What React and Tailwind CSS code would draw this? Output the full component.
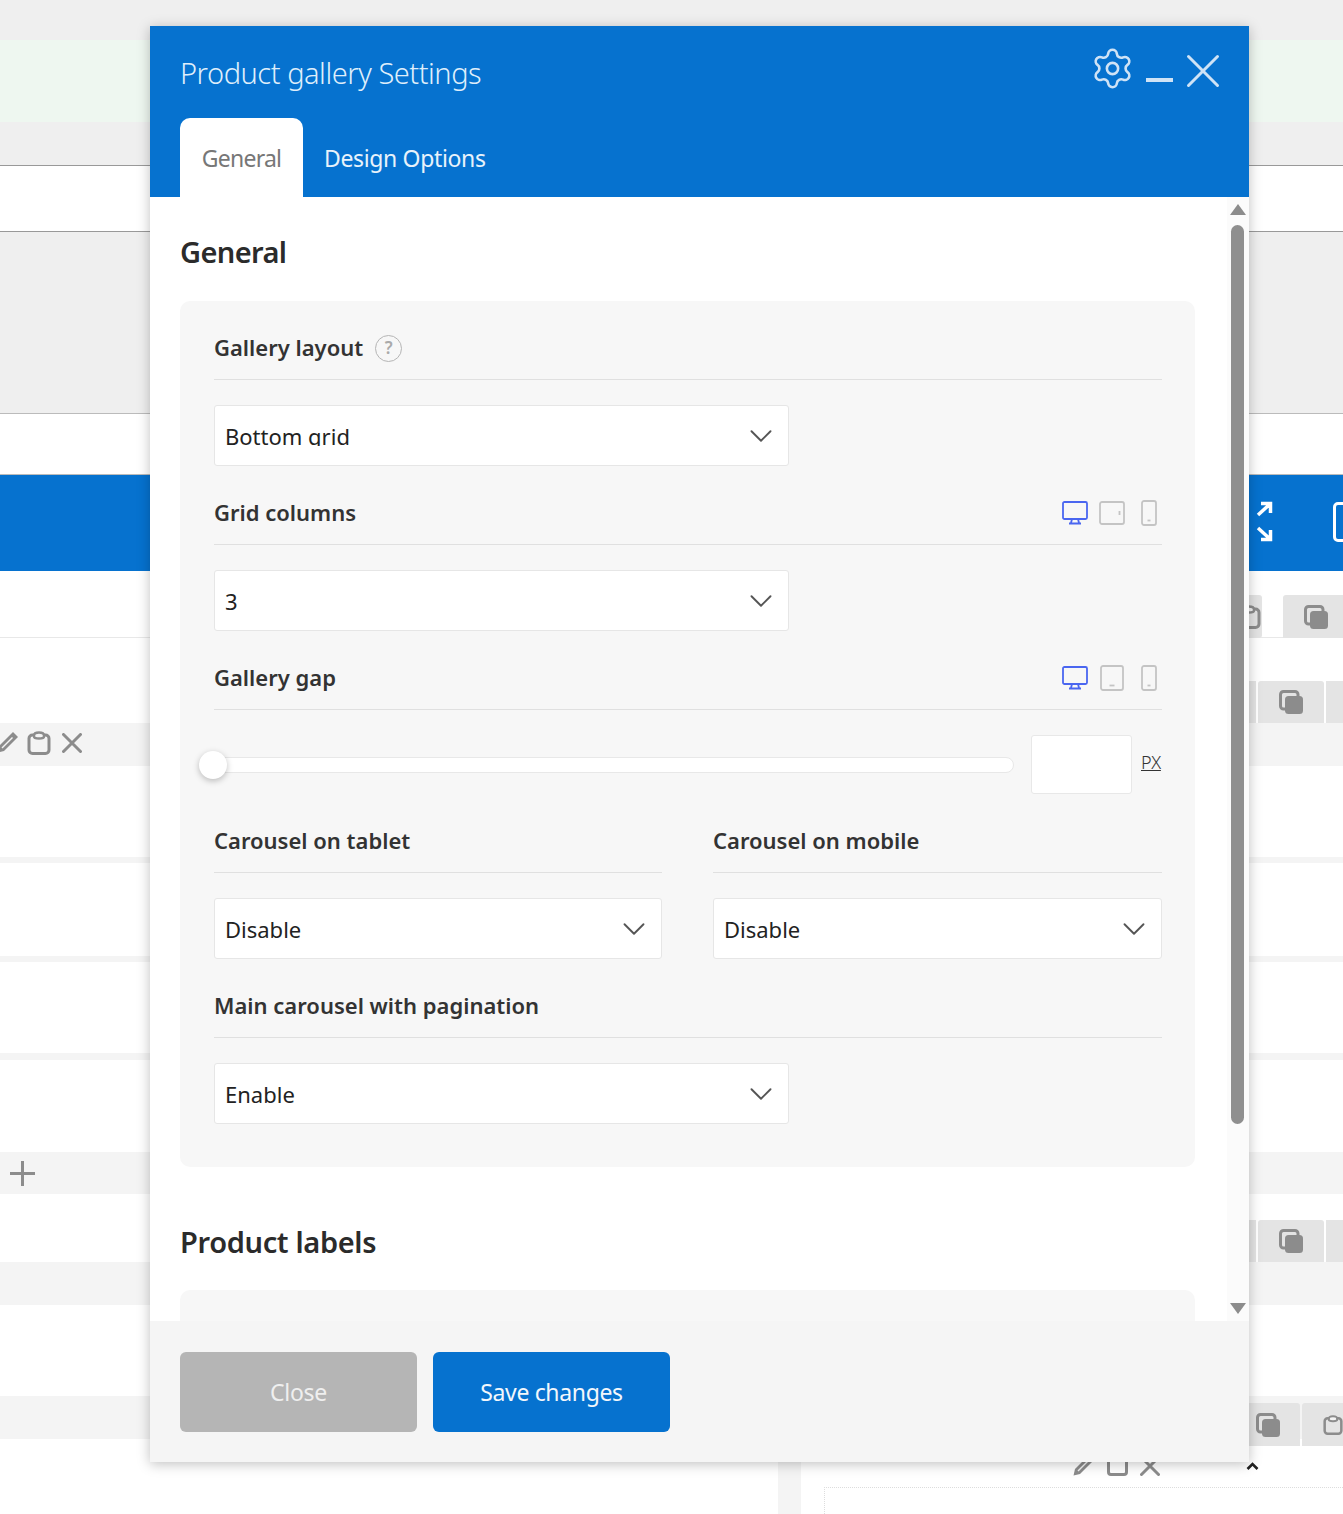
import { ChevronDown, Settings, X } from 'lucide-react';

const font = { fontFamily: '"Noto Sans", "Open Sans", sans-serif' };

// page behind the modal
const rows = [
  'h-[40px] bg-[#efefef]',
  'h-[82px] bg-[#eef7f0]',
  'h-[44px] bg-[#efefef] border-b border-[#999999]',
  'h-[66px] bg-white border-b border-[#999999]',
  'h-[182px] bg-[#efefef] border-b border-[#bbbbbb]',
  'h-[61px] bg-white border-b border-[#bbbbbb]',
  'h-[96px] bg-[#0672cf]',
  'h-[67px] bg-white border-b border-[#e8e8e8]',
  'h-[85px] bg-white',
  'h-[43px] bg-[#f4f4f4]',
  'h-[91px] bg-white',
  'h-[6px] bg-[#f4f4f4]',
  'h-[93px] bg-white',
  'h-[6px] bg-[#f4f4f4]',
  'h-[91px] bg-white',
  'h-[7px] bg-[#f4f4f4]',
  'h-[92px] bg-white',
  'h-[42px] bg-[#f4f4f4]',
  'h-[68px] bg-white',
  'h-[43px] bg-[#f4f4f4]',
  'h-[91px] bg-white',
  'h-[43px] bg-[#f4f4f4]',
  'h-[75px] bg-white',
];

function CopyIcon() {
  return (
    <svg width="26" height="26" viewBox="0 0 26 26" fill="none">
      <path d="M7 20H5.500A3 3 0 0 1 2.500 17V5.500A3 3 0 0 1 5.500 2.500H17A3 3 0 0 1 20 5.500V7" stroke="#8c8c8c" strokeWidth="3" />
      <rect x="7" y="7" width="18" height="18" rx="3.500" fill="#8c8c8c" />
    </svg>
  );
}

function ClipIcon({ size = 24 }) {
  return (
    <svg width={size} height={size} viewBox="0 0 24 24" fill="none" stroke="#8c8c8c" strokeWidth="3">
      <rect x="2" y="4" width="20" height="18.500" rx="3.500" />
      <path d="M7 5.500V4.500C7 2.800 8.500 1.500 12 1.500S17 2.800 17 4.500V5.500C17 7 15 7.500 12 7.500S7 7 7 5.500Z" fill="#f4f4f4" strokeWidth="2.500" />
    </svg>
  );
}

function PencilIcon() {
  return (
    <svg width="22" height="22" viewBox="0 0 22 22" fill="#8c8c8c">
      <path d="M16 1L21 6L7 20L0.500 21.500L2 15Z" />
      <path d="M15 6L16 7L5.500 17.500L4.500 16.500Z" fill="#f4f4f4" />
    </svg>
  );
}

function ThinX({ size = 20 }) {
  return (
    <svg width={size} height={size} viewBox="0 0 20 20" stroke="#8c8c8c" strokeWidth="3" strokeLinecap="round">
      <path d="M1.500 1.500L18.500 18.500M18.500 1.500L1.500 18.500" />
    </svg>
  );
}

function Background() {
  return (
    <div className="absolute inset-0 overflow-hidden">
      {rows.map((r, i) => (
        <div key={i} className={r} />
      ))}

      <div className="absolute left-[778px] top-[1439px] w-[23px] h-[75px] bg-[#f4f4f4]" />
      <div className="absolute left-[824px] top-[1487px] w-[519px] h-[27px] border-t border-l border-dotted border-[#dddddd]" />

      {/* left edge icons */}
      <div className="absolute left-[-3px] top-[731px]"><PencilIcon /></div>
      <div className="absolute left-[27px] top-[731px]"><ClipIcon /></div>
      <div className="absolute left-[62px] top-[733px]"><ThinX /></div>
      <div className="absolute left-[10px] top-[1172px] w-[25px] h-[3px] bg-[#8c8c8c]" />
      <div className="absolute left-[21px] top-[1161px] w-[3px] h-[25px] bg-[#8c8c8c]" />

      {/* right edge buttons */}
      <div className="absolute left-[1249px] top-[595px] w-[13px] h-[43px] flex items-center justify-end bg-[#e4e4e4] rounded-r-[3px] overflow-hidden">
        <div className="shrink-0 mr-[1px]"><ClipIcon /></div>
      </div>
      <div className="absolute left-[1283px] top-[595px] w-[60px] h-[43px] bg-[#e4e4e4] rounded-tl-[3px] flex items-center pl-[20px]"><CopyIcon /></div>
      <div className="absolute left-[1249px] top-[681px] w-[7px] h-[42px] bg-[#e4e4e4]" />
      <div className="absolute left-[1258px] top-[681px] w-[66px] h-[42px] bg-[#e4e4e4] rounded-t-[3px] flex items-center justify-center"><CopyIcon /></div>
      <div className="absolute left-[1326px] top-[681px] w-[17px] h-[42px] bg-[#e4e4e4]" />
      <div className="absolute left-[1249px] top-[1220px] w-[7px] h-[42px] bg-[#e4e4e4]" />
      <div className="absolute left-[1258px] top-[1220px] w-[66px] h-[42px] bg-[#e4e4e4] rounded-t-[3px] flex items-center justify-center"><CopyIcon /></div>
      <div className="absolute left-[1326px] top-[1220px] w-[17px] h-[42px] bg-[#e4e4e4]" />
      <div className="absolute left-[1249px] top-[1403px] w-[51px] h-[43px] bg-[#e4e4e4] rounded-tr-[3px] flex items-center pl-[6px]"><CopyIcon /></div>
      <div className="absolute left-[1302px] top-[1403px] w-[41px] h-[43px] bg-[#e4e4e4] rounded-tl-[3px] flex items-center pl-[21px]"><ClipIcon /></div>

      {/* icons under the modal */}
      <div className="absolute left-[1073px] top-[1454px]"><PencilIcon /></div>
      <div className="absolute left-[1107px] top-[1454px] w-[21px] h-[22px] border-[3px] border-[#8c8c8c] rounded-[4px]" />
      <div className="absolute left-[1140px] top-[1456px]"><ThinX /></div>
      <svg className="absolute left-[1246px] top-[1462px]" width="13" height="9" viewBox="0 0 13 9" fill="none" stroke="#222222" strokeWidth="2.600">
        <path d="M1.500 7L6.500 2L11.500 7" />
      </svg>

      {/* blue bar icons */}
      <svg className="absolute left-[1255px] top-[500px]" width="20" height="44" viewBox="0 0 20 44" fill="none" stroke="white" strokeWidth="3.500">
        <path d="M3 15L15 4M6 3.500H15.500V13M3 28L15 39M6 39.500H15.500V30" />
      </svg>
      <div className="absolute left-[1333px] top-[502px] w-[20px] h-[40px] border-[3px] border-white rounded-[5px]" />
    </div>
  );
}

function Desktop() {
  return (
    <svg width="26" height="24" viewBox="0 0 26 24" fill="none" stroke="#4a66f0" strokeWidth="1.800">
      <rect x="1" y="1" width="24" height="17" rx="1.500" />
      <path d="M10 18L9 22M16 18L17 22M7 22.500H19" />
    </svg>
  );
}

function Tablet({ landscape }) {
  if (landscape) {
    return (
      <svg width="26" height="24" viewBox="0 0 26 24" fill="none" stroke="#c4c4c4" strokeWidth="1.800">
        <rect x="1" y="1" width="24" height="22" rx="2" />
        <path d="M20.500 10V14" />
      </svg>
    );
  }
  return (
    <svg width="24" height="26" viewBox="0 0 24 26" fill="none" stroke="#c4c4c4" strokeWidth="1.800">
      <rect x="1" y="1" width="22" height="24" rx="2" />
      <path d="M9.500 20.500H14.500" />
    </svg>
  );
}

function Phone() {
  return (
    <svg width="16" height="26" viewBox="0 0 16 26" fill="none" stroke="#c4c4c4" strokeWidth="1.800">
      <rect x="1" y="1" width="14" height="24" rx="2" />
      <path d="M6.500 20.500H9.500" />
    </svg>
  );
}

function Label({ children, devices, tabletLandscape, help }) {
  return (
    <div className="h-[56px] flex items-center justify-between border-b border-[#e0e0e0] pb-[7px]">
      <div className="flex items-center gap-[12px]">
        <span className="-mt-[2px] text-[22px] font-semibold text-[#333333]">{children}</span>
        {help && (
          <span className="w-[27px] h-[27px] rounded-full border border-[#b5b5b5] flex items-center justify-center text-[17px] font-semibold text-[#aaaaaa]">?</span>
        )}
      </div>
      {devices && (
        <div className="flex items-center mr-[5px]">
          <Desktop />
          <div className="ml-[11px] w-[26px] flex justify-center"><Tablet landscape={tabletLandscape} /></div>
          <div className="ml-[16px]"><Phone /></div>
        </div>
      )}
    </div>
  );
}

// the first select's value is cut at the baseline in the original
function Select({ value, className, clip }) {
  return (
    <div className={`mt-[25px] h-[61px] bg-white border border-[#e6e6e6] rounded-[3px] flex items-center justify-between pl-[10px] pr-[8px] ${className}`}>
      <span className={clip ? 'h-[22px] -mt-[2px] leading-[25px] overflow-hidden text-[22px] text-[#222222]' : 'h-[25px] leading-[25px] mt-[1px] text-[22px] text-[#222222]'}>{value}</span>
      <ChevronDown size={38} strokeWidth={1.200} color="#555555" className="shrink-0" />
    </div>
  );
}

export default function App() {
  return (
    <div className="relative w-[1343px] h-[1514px] overflow-hidden" style={font}>
      <Background />

      <div className="absolute left-[150px] top-[26px] w-[1099px] h-[1436px] flex flex-col bg-white shadow-[0_2px_12px_rgba(0,0,0,0.25)]">
        {/* Header */}
        <div className="h-[171px] shrink-0 bg-[#0672cf] relative flex flex-col justify-end">
          <div className="absolute left-[30px] top-[26px] text-[29px] font-light leading-[42px] text-[#dfeefb] tracking-[-0.47px]">Product gallery Settings</div>
          <div className="absolute left-[940px] top-[20px] flex items-start">
            <Settings size={45} strokeWidth={1.400} color="#cfe3f6" className="shrink-0" />
            <div className="w-[27px] h-[4px] mt-[32px] ml-[11px] bg-[#cfe3f6] shrink-0" />
            <X size={58} strokeWidth={1.240} color="#cfe3f6" className="ml-[1px] -mt-[4px] shrink-0" />
          </div>
          <div className="flex pl-[30px] h-[79px]">
            <div className="w-[123px] bg-white rounded-t-[10px] flex items-center justify-center pt-[2px] text-[23px] text-[#777777] tracking-[-0.75px]">General</div>
            <div className="pl-[21px] pt-[2px] flex items-center text-[23px] text-[#e8f2fb] tracking-[-0.35px]">Design Options</div>
          </div>
        </div>

        {/* Body */}
        <div className="h-[1124px] shrink-0 relative overflow-hidden pl-[30px]">
          <h2 className="h-[104px] pt-[32px] text-[29px] leading-[46px] font-semibold text-[#2b2b2b] tracking-[-0.6px]">General</h2>

          <div className="w-[1015px] h-[866px] bg-[#f7f7f7] rounded-[10px] pl-[34px] pr-[33px] pt-[23px]">
            <Label help>Gallery layout</Label>
            <Select value="Bottom grid" className="w-[575px]" clip />

            <div className="mt-[23px]"><Label devices tabletLandscape>Grid columns</Label></div>
            <Select value="3" className="w-[575px]" />

            <div className="mt-[23px]"><Label devices>Gallery gap</Label></div>
            <div className="mt-[25px] h-[59px] flex items-center relative">
              <div className="w-[800px] h-[16px] bg-white border border-[#e8e8e8] rounded-full" />
              <div className="absolute left-[-15px] top-[16px] w-[28px] h-[28px] rounded-full bg-white shadow-[0_2px_6px_rgba(0,0,0,0.25)]" />
              <div className="ml-[17px] w-[101px] h-[59px] bg-white border border-[#e8e8e8] rounded-[3px]" />
              <span className="ml-[9px] -mt-[4px] text-[18px] underline font-light text-[#333333] tracking-[-0.1px]">PX</span>
            </div>

            <div className="mt-[23px] grid grid-cols-[448px_449px] gap-x-[51px]">
              <div>
                <Label>Carousel on tablet</Label>
                <Select value="Disable" className="w-full" />
              </div>
              <div>
                <Label>Carousel on mobile</Label>
                <Select value="Disable" className="w-full" />
              </div>
            </div>

            <div className="mt-[23px]"><Label>Main carousel with pagination</Label></div>
            <Select value="Enable" className="w-[575px]" />
          </div>

          <h2 className="h-[123px] pt-[52px] text-[29px] leading-[46px] font-semibold text-[#2b2b2b] tracking-[-0.35px]">Product labels</h2>
          <div className="w-[1015px] h-[60px] bg-[#f7f7f7] rounded-t-[10px]" />

          {/* Scrollbar */}
          <div className="absolute right-0 top-0 bottom-0 w-[22px] bg-[#fbfbfb]">
            <div className="absolute left-[3px] top-[7px] w-0 h-0 border-x-[8px] border-x-transparent border-b-[11px] border-b-[#8c8c8c]" />
            <div className="absolute left-[4px] top-[28px] w-[13px] h-[899px] rounded-full bg-[#8f8f8f]" />
            <div className="absolute left-[3px] bottom-[7px] w-0 h-0 border-x-[8px] border-x-transparent border-t-[11px] border-t-[#8c8c8c]" />
          </div>
        </div>

        {/* Footer */}
        <div className="flex-1 bg-[#f5f5f5] flex gap-[16px] pl-[30px] pt-[31px]">
          <button className="w-[237px] h-[80px] rounded-[6px] bg-[#b5b5b5] text-[23px] text-[#efefef] tracking-[-0.3px]">Close</button>
          <button className="w-[237px] h-[80px] rounded-[6px] bg-[#0672cf] text-[23px] text-[#f2f7fc] tracking-[-0.35px]">Save changes</button>
        </div>
      </div>
    </div>
  );
}
